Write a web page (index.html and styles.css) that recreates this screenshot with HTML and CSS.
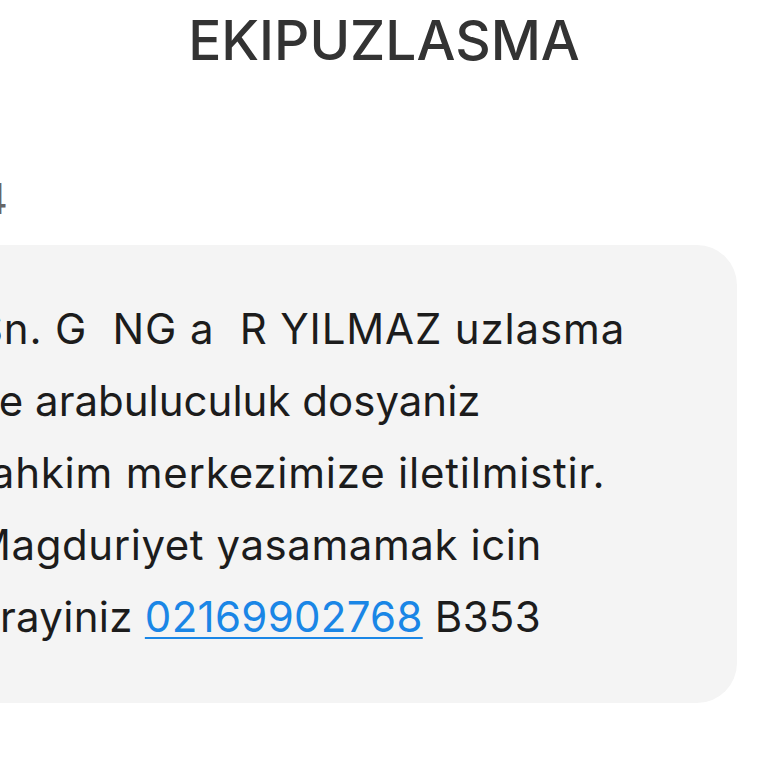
FILE: index.html
```html
<!DOCTYPE html>
<html lang="tr">
<head>
<meta charset="utf-8">
<link rel="stylesheet" href="styles.css">
</head>
<body>
<div class="screen">
  <header class="title">EKIPUZLASMA</header>
  <div class="time"><span>14</span></div>
  <div class="bubble">
    <p class="msg">
      <span class="line line-1">Sn. G&nbsp;&nbsp;NG a&nbsp;&nbsp;R YILMAZ uzlasma</span>
      <span class="line line-2">ve arabuluculuk dosyaniz</span>
      <span class="line line-3">Tahkim merkezimize iletilmistir.</span>
      <span class="line line-4">Magduriyet yasamamak icin</span>
      <span class="line line-5">arayiniz <a class="link" href="#">02169902768</a> B353</span>
    </p>
  </div>
</div>
</body>
</html>
```
FILE: styles.css
```css
html, body {
  margin: 0;
  padding: 0;
  background: #ffffff;
}
.screen {
  width: 768px;
  height: 768px;
  overflow: hidden;
  font-family: Inter, "Noto Sans", sans-serif;
}
.title {
  text-align: center;
  font-size: 55px;
  font-weight: 500;
  color: #333333;
  line-height: 80px;
}
.time {
  display: flex;
  justify-content: flex-end;
  width: 8px;
  margin-top: 99px;
  font-size: 42px;
  line-height: 40px;
  color: #666666;
  white-space: nowrap;
}
.bubble {
  margin-top: 26px;
  margin-left: -60px;
  width: 797px;
  height: 458px;
  box-sizing: border-box;
  background: #f4f4f4;
  border-radius: 40px;
  padding: 48px 0 0 36px;
}
.msg {
  margin: 0;
  font-size: 42px;
  line-height: 72px;
  color: #1c1c1c;
  white-space: nowrap;
}
.line {
  display: block;
}
.line-1 { letter-spacing: 0.85px; }
.line-3 { margin-left: -10px; letter-spacing: 0.78px; }
.line-4 { margin-left: -3px; letter-spacing: 0.56px; }
.line-5 { letter-spacing: 0.3px; }
.link {
  color: #1a86e6;
  text-decoration: underline;
  text-decoration-thickness: 2px;
  text-underline-offset: 5px;
}
```
